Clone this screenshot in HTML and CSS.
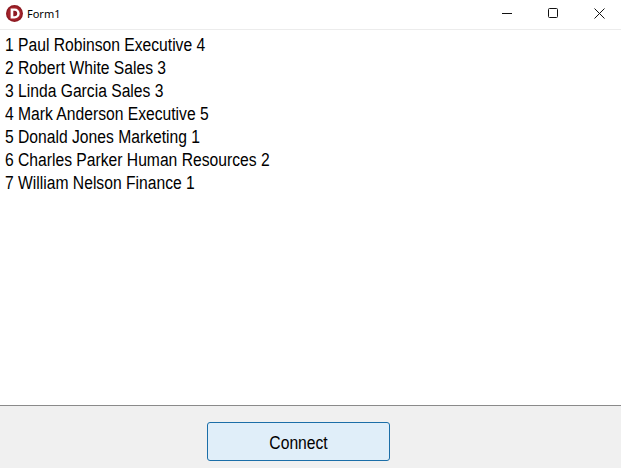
FILE: index.html
```html
<!DOCTYPE html>
<html lang="en">
<head>
<meta charset="utf-8">
<title>Form1</title>
<link rel="stylesheet" href="styles.css">
</head>
<body>
<div class="window">
  <header class="titlebar">
    <div class="title-left">
      <svg class="app-icon" width="17" height="17" viewBox="0 0 17 17">
        <circle cx="8.5" cy="8.5" r="8.5" fill="#8e1a22"/>
        <circle cx="8.5" cy="8.5" r="7" fill="#a3232b"/>
        <path d="M4.6 3.4h4a5.1 5.1 0 0 1 0 10.2h-4z" fill="#fff"/>
        <path d="M7.3 5.8h1.2a2.7 2.7 0 0 1 0 5.4H7.3z" fill="#8e1a22"/>
      </svg>
      <span class="title-text">Form1</span>
    </div>
    <div class="controls">
      <span class="ctl"><svg width="10" height="10" viewBox="0 0 10 10"><path d="M0 5.5h10" stroke="#111" fill="none"/></svg></span>
      <span class="ctl"><svg width="10" height="10" viewBox="0 0 10 10"><rect x="0.5" y="0.5" width="9" height="9" rx="1" stroke="#111" fill="none"/></svg></span>
      <span class="ctl"><svg width="11" height="11" viewBox="0 0 11 11"><path d="M0.5 0.5l10 10M10.5 0.5l-10 10" stroke="#111" fill="none"/></svg></span>
    </div>
  </header>
  <main class="list">
    <div class="row">1 Paul Robinson Executive 4</div>
    <div class="row">2 Robert White Sales 3</div>
    <div class="row">3 Linda Garcia Sales 3</div>
    <div class="row">4 Mark Anderson Executive 5</div>
    <div class="row">5 Donald Jones Marketing 1</div>
    <div class="row">6 Charles Parker Human Resources 2</div>
    <div class="row">7 William Nelson Finance 1</div>
  </main>
  <footer class="footer">
    <button class="connect" type="button"><span class="connect-label">Connect</span></button>
  </footer>
</div>
</body>
</html>
```
FILE: styles.css
```css
* { box-sizing: border-box; }
html, body { margin: 0; padding: 0; background: #fff; }
.window {
  width: 621px;
  height: 468px;
  display: flex;
  flex-direction: column;
  overflow: hidden;
  font-family: "Liberation Sans", Arial, sans-serif;
  color: #000;
}
.titlebar {
  height: 30px;
  flex: none;
  display: flex;
  align-items: flex-start;
  justify-content: space-between;
  border-bottom: 1px solid #ececec;
  background: #fff;
}
.title-left { display: flex; align-items: center; gap: 4px; padding: 5px 0 0 6px; }
.app-icon { display: block; }
.title-text { font-family: "Noto Sans", sans-serif; font-size: 11px; color: #000; }
.controls { display: flex; margin-right: -1px; }
.ctl { width: 46px; height: 26px; display: flex; align-items: center; justify-content: center; }
.list { flex: 1; padding: 4px 0 0 5px; background: #fff; }
.row {
  font-size: 18px;
  line-height: 23px;
  height: 23px;
  white-space: nowrap;
  transform: scaleX(0.87);
  transform-origin: left center;
}
.footer {
  height: 63px;
  flex: none;
  background: #f0f0f0;
  border-top: 1px solid #8a8a8a;
  padding: 16px 0 0 207px;
}
.connect {
  width: 183px;
  height: 39px;
  display: block;
  background: #e0eef9;
  border: 1px solid #1b6ea8;
  border-radius: 3px;
  font-family: "Liberation Sans", Arial, sans-serif;
  font-size: 18px;
  color: #000;
  padding: 3px 0 0;
}
.connect-label { display: inline-block; transform: scaleX(0.87); }
```
